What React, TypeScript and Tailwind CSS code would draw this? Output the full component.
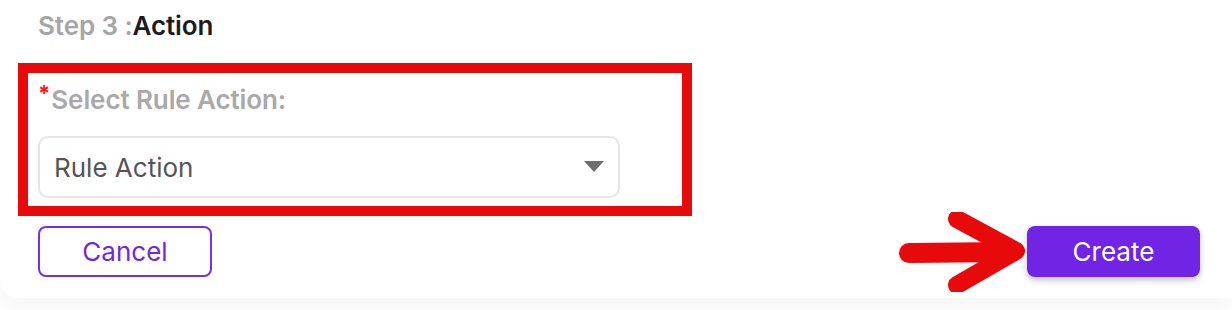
function Arrow() {
  return (
    <svg width="130" height="80" viewBox="0 0 130 80" className="block">
      <path
        d="M10 41 L110 40"
        stroke="#e8090b"
        strokeWidth="20"
        strokeLinecap="round"
        fill="none"
      />
      <path
        d="M58 7 L117 39 L58 73"
        stroke="#e8090b"
        strokeWidth="18"
        strokeLinecap="round"
        strokeLinejoin="round"
        fill="none"
      />
    </svg>
  );
}

export default function App() {
  return (
    <div className="w-[1232px] h-[310px] bg-white overflow-hidden font-['Inter',sans-serif]">
      <div className="h-[298px] bg-white rounded-bl-[18px] shadow-[0_10px_22px_rgba(0,0,0,0.045)] pl-[38px] pr-[32px] pt-[10px] flex flex-col">
        {/* heading */}
        <div className="h-[32px] text-[26px] leading-[32px] font-semibold tracking-[-0.1px]">
          <span className="text-[#a6a6a6]">Step 3 :</span>
          <span className="text-[#1c1c1e]">Action</span>
        </div>

        {/* highlighted field */}
        <div className="mt-[21px] -ml-[20px] w-[674px] h-[153px] shrink-0 border-[10px] border-[#e8090b] pl-[10px] pt-[9px]">
          <div className="flex items-start h-[32px]">
            <span className="text-[#ff1a1a] text-[22px] leading-[22px] font-bold">*</span>
            <span className="text-[#a9a9a9] text-[26px] leading-[32px] font-semibold mt-[2px] ml-[1px] tracking-[-0.1px]">
              Select Rule Action:
            </span>
          </div>
          <div className="mt-[22px] w-[582px] h-[62px] rounded-[10px] border-2 border-[#e3e5ea] flex items-center justify-between pl-[14px] pr-[14px]">
            <span className="text-[26px] text-[#555555]">Rule Action</span>
            <svg width="20" height="12" viewBox="0 0 20 12">
              <path d="M0 0 L20 0 L10 11 Z" fill="#6e6e6e" />
            </svg>
          </div>
        </div>

        {/* actions */}
        <div className="mt-[10px] h-[51px] flex items-center justify-between">
          <button className="w-[174px] h-[51px] rounded-[8px] border-2 border-[#7a2ee6] text-[#7126e3] text-[26px]">
            Cancel
          </button>
          <div className="flex items-center">
            <div className="-mr-[2px] -my-[15px]">
              <Arrow />
            </div>
            <button className="w-[173px] h-[51px] rounded-[8px] bg-[#7124e4] text-white text-[26px] shadow-[0_3px_6px_rgba(0,0,0,0.25)]">
              Create
            </button>
          </div>
        </div>
      </div>
    </div>
  );
}
